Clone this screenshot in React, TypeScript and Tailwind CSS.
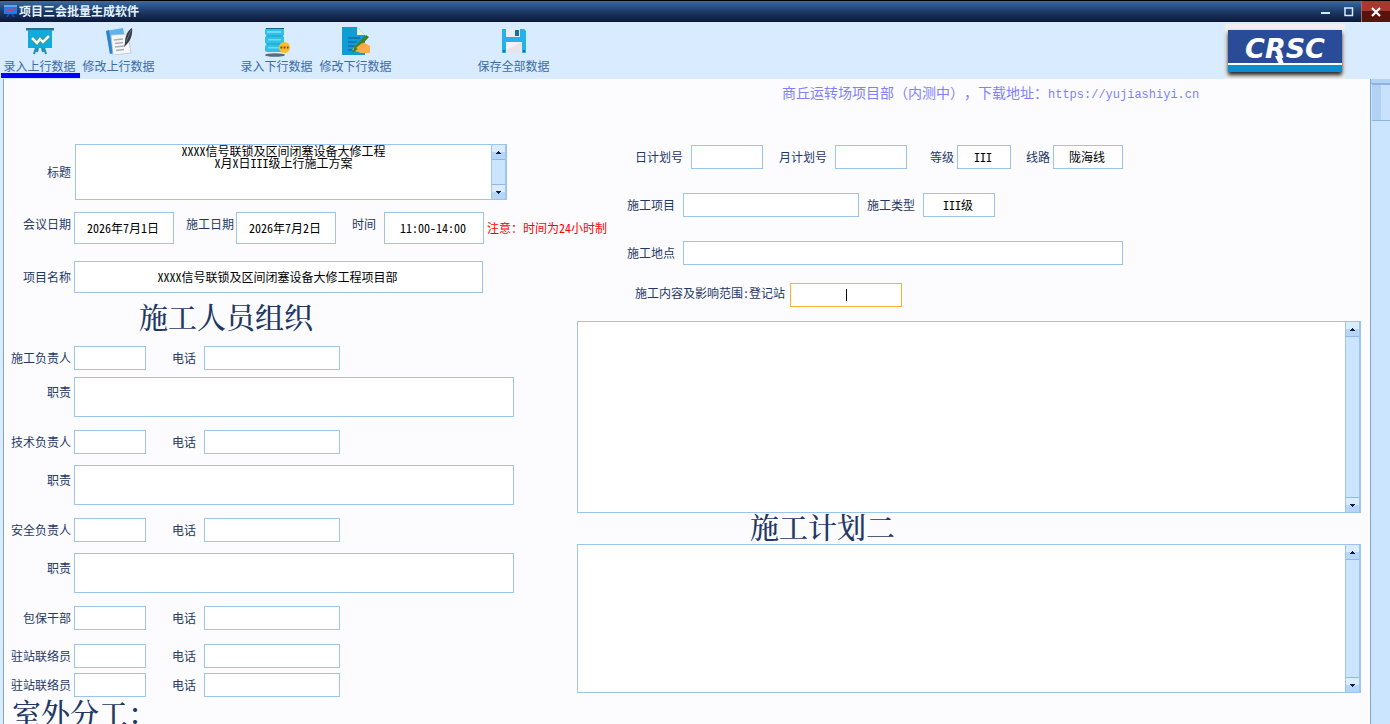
import React, { useId, useState } from 'react';

const uiFont = "font-['Noto_Sans_Mono_CJK_SC','Noto_Sans_CJK_SC',sans-serif]";
const headingFont = "font-['Noto_Serif_CJK_SC','Noto_Sans_CJK_SC',serif]";

const boxStyle = 'border border-[#9bc4ef] bg-white text-black text-center outline-none focus:border-[#f5b335]';

interface FieldProps {
  label: string;
  width: string;
  height?: string;
  value?: string;
  labelClass?: string;
  gap?: string;
  className?: string;
}

const Field: React.FC<FieldProps> = ({ label, width, height = 'h-6', value = '', labelClass = '', gap = 'gap-2', className = '' }) => {
  const id = useId();
  return (
    <div className={`flex items-center ${gap} ${className}`}>
      <label htmlFor={id} className={`shrink-0 whitespace-nowrap ${labelClass}`}>{label}</label>
      <input id={id} defaultValue={value} className={`${boxStyle} pb-0.5 pr-0.5 ${width} ${height}`} />
    </div>
  );
};

const SideLabel = 'w-[67px] text-right';

const ScrollBar: React.FC = () => (
  <div className="w-[15px] shrink-0 flex flex-col justify-between bg-[#cbe4ff] border-x border-[#9bc4ef]">
    <ScrollButton up />
    <ScrollButton />
  </div>
);

const ScrollButton: React.FC<{ up?: boolean }> = ({ up }) => (
  <button
    aria-label={up ? '向上' : '向下'}
    className={`h-[15px] w-full flex items-center justify-center border-[#8fb9ea] bg-linear-to-b from-[#dcebfd] from-50% to-[#b9d5f5] to-50% ${up ? 'border-b' : 'border-t'}`}
  >
    <svg width="5" height="3" viewBox="0 0 5 3" fill="#0b1f4b" shapeRendering="crispEdges">
      {up ? <path d="M2 0h1v1h1v1h1v1H0V2h1V1h1z" /> : <path d="M0 0h5v1H4v1H3v1H2V2H1V1H0z" />}
    </svg>
  </button>
);

const TextArea: React.FC<{ id?: string; label?: string; value?: string; className: string }> = ({ id, label, value = '', className }) => (
  <div className={`flex border border-[#9bc4ef] bg-white ${className}`}>
    <textarea
      id={id}
      aria-label={label}
      defaultValue={value}
      className="flex-1 min-w-0 resize-none overflow-hidden text-center text-black leading-3 outline-none"
    />
    <ScrollBar />
  </div>
);

const Duty: React.FC<{ className?: string }> = ({ className = '' }) => {
  const id = useId();
  return (
    <div className={`flex gap-[3px] ${className}`}>
      <label htmlFor={id} className={`${SideLabel} pt-[7px]`}>职责</label>
      <textarea id={id} className={`${boxStyle} w-[440px] h-10 resize-none block`} />
    </div>
  );
};

const Person: React.FC<{ label: string; className?: string }> = ({ label, className = '' }) => (
  <div className={`flex ${className}`}>
    <Field label={label} width="w-[72px]" labelClass={SideLabel} gap="gap-[3px]" />
    <Field label="电话" width="w-[136px]" className="ml-[26px]" />
  </div>
);

const BoardIcon = () => (
  <svg width="28" height="28" viewBox="0 0 28 28">
    <path d="M0 1h28v2.500H0z" fill="#2d6f86" />
    <path d="M2 3h24v18H2z" fill="#10abdd" />
    <path d="M10 21l-2 6M18 21l2 6M12 21l-1 4M16 21l1 4" stroke="#168db5" strokeWidth="2" />
    <path d="M6 11l5 5 3-4 3 3 6-6" fill="none" stroke="#4a8a76" strokeWidth="4" />
    <path d="M6 11l5 5 3-4 3 3 6-6" fill="none" stroke="#f1fff0" strokeWidth="2.500" />
  </svg>
);

const NoteIcon = () => (
  <svg width="28" height="28" viewBox="0 0 28 28">
    <path d="M1 4l17-3 4 22-17 4z" fill="#5fb2ee" />
    <path d="M1 4l3-1 4 23-3 1z" fill="#2f83cb" />
    <path d="M6 8l17-1 3 19-18 2z" fill="#f4f6f8" stroke="#a9b8c8" strokeWidth="0.6" />
    <path d="M9 13l9-1M10 16.500l8-1M10 20l9-1M11 23.500l8-1" stroke="#a6b0bb" strokeWidth="1.300" />
    <path d="M27 1c-5 3-7 9-7 15l-1 4 3-3c3-3 6-9 5-16z" fill="#343b45" />
    <path d="M26 3l-5 12" stroke="#79828f" strokeWidth="0.800" />
  </svg>
);

const DatabaseIcon = () => (
  <svg width="28" height="30" viewBox="0 0 28 30">
    <ellipse cx="12" cy="28" rx="10" ry="1.700" fill="#5a6b7c" />
    <path d="M3 1h18v7l-1 1 1 1v7l-1 1 1 1v6H4l-2-1v-5l2-2-2-1v-6l2-1-2-2V3z" fill="#31c1e8" />
    <path d="M3 1h18v1H3z" fill="#17668a" />
    <path d="M4 4h14v2H4zM5 12h13v1.500H5zM5 20h11v1.500H5z" fill="#6fdcf6" />
    <path d="M3 9h17M3 17h17" stroke="#1ba3cc" strokeWidth="1.200" />
    <circle cx="21.500" cy="20.500" r="5.500" fill="#fdbd27" />
    <path d="M17.500 20.500h1.800M20.700 20.500h1.800M23.900 20.500h1.600" stroke="#7b3e16" strokeWidth="2" />
  </svg>
);

const EditIcon = () => (
  <svg width="28" height="28" viewBox="0 0 28 28">
    <path d="M0 0h15l8 8v20H0z" fill="#0d9ed5" />
    <path d="M15 0l8 8h-8z" fill="#e5f6df" />
    <path d="M6 11h12M6 15h9M6 19h7M6 23h5" stroke="#1768b3" strokeWidth="1.500" />
    <path d="M10 23l5-6 5-3 3 2 5 3v7h-9l-6-2z" fill="#ffad4a" />
    <path d="M10 26l3-7L24 8l3 2-11 12z" fill="#3b8125" />
    <path d="M14 21l6-5 4 2-6 5z" fill="#fba943" />
  </svg>
);

const SaveIcon = () => (
  <svg width="28" height="28" viewBox="0 0 28 28">
    <path d="M2 2h22l2 2v22H2z" fill="#27b1eb" />
    <path d="M6 2h14v8H6z" fill="#e9eef1" />
    <path d="M15 3h4v6h-4z" fill="#176ea7" />
    <path d="M6 15h16v11H6z" fill="#e6e6ea" />
    <path d="M6 15h16l-16 8z" fill="#f3f3f5" />
    <path d="M3 23h2v2H3zM23 23h2v2h-2z" fill="#146fac" />
  </svg>
);

const tools = [
  { name: '录入上行数据', icon: <BoardIcon /> },
  { name: '修改上行数据', icon: <NoteIcon /> },
  null,
  { name: '录入下行数据', icon: <DatabaseIcon /> },
  { name: '修改下行数据', icon: <EditIcon /> },
  null,
  { name: '保存全部数据', icon: <SaveIcon /> },
];

const Toolbar: React.FC = () => {
  const [active, setActive] = useState('录入上行数据');
  return (
    <header className="shrink-0 flex justify-between bg-[#d9ebff] pl-px pr-[45px]">
      <nav className="flex pb-px">
        {tools.map((tool, i) =>
          tool ? (
            <button
              key={tool.name}
              onClick={() => setActive(tool.name)}
              className={`w-[79px] flex flex-col items-center pt-[5px] pr-0.5 border-b-[5px] text-[#3c6ca5] ${
                active === tool.name ? 'border-[#0000ff]' : 'border-transparent'
              }`}
            >
              <span className="h-7 flex justify-center">{tool.icon}</span>
              <span className="mt-1 leading-[14px] whitespace-nowrap">{tool.name}</span>
            </button>
          ) : (
            <span key={i} className="w-[79px]" />
          )
        )}
      </nav>
      <Logo />
    </header>
  );
};

const Logo: React.FC = () => (
  <div className="self-end w-[120px] h-[55px] bg-[#efeff0] px-[3px] pt-1.5">
    <div className="relative h-[42px] flex flex-col shadow-[0_3px_4px_#222]">
      <div className="h-[33px] pt-1 bg-[#294b98] flex items-center justify-center">
        <span className="font-['DejaVu_Sans',sans-serif] font-bold italic text-[27px] leading-[29px] text-white">CRSC</span>
      </div>
      <div className="h-0.5 bg-white" />
      <div className="h-[7px] bg-[#0790cb]" />
      <svg className="absolute left-[47px] top-[26px]" width="10" height="8" viewBox="0 0 10 8">
        <path d="M0 0h6l3 8H4z" fill="#fff" />
      </svg>
    </div>
  </div>
);

const TitleBar: React.FC = () => (
  <div className="shrink-0 h-[22px] flex items-center justify-between pl-1 border-t border-black bg-linear-to-b from-[#3a6ba3] via-[#1d3a68] via-50% to-[#0b1838]">
    <div className="flex items-center gap-0.5 pb-0.5 text-[#e3f4ff] font-bold">
      <svg width="13" height="13" viewBox="0 0 13 13">
        <path d="M0 1h13v9H0z" fill="#1b7df0" />
        <path d="M0 1h13v2H0z" fill="#52a8fa" />
        <path d="M2 8l3-3 2 2 4-3" stroke="#e93645" strokeWidth="1.500" fill="none" />
        <path d="M5 10l-2 3M8 10l2 3" stroke="#1551d0" strokeWidth="1.500" />
      </svg>
      <span>项目三会批量生成软件</span>
    </div>
    <div className="self-stretch flex">
      <button aria-label="最小化" className="w-[22px] flex items-center justify-center">
        <svg width="10" height="10"><path d="M0 5h9v2H0z" fill="#d3eaff" /></svg>
      </button>
      <button aria-label="最大化" className="w-6 flex items-center justify-center">
        <svg width="10" height="10"><path d="M1 1h7.500v7.500H1zM0 1h9" stroke="#d3eaff" strokeWidth="1.500" fill="none" /></svg>
      </button>
      <button aria-label="关闭" className="w-[29px] flex items-center justify-center border-l border-[#a06b70] bg-linear-to-b from-[#a8382e] from-50% to-[#59130f] to-50%">
        <svg width="10" height="10"><path d="M1 1l8 8M9 1l-8 8" stroke="#fff" strokeWidth="2.200" /></svg>
      </button>
    </div>
  </div>
);

const Heading: React.FC<{ className: string; children: React.ReactNode }> = ({ className, children }) => (
  <h2 className={`${headingFont} text-[29px] leading-[32px] font-medium whitespace-nowrap ${className}`}>{children}</h2>
);

const LeftForm: React.FC = () => (
  <section className="w-[573px] shrink-0 pt-[65px]">
    <div className="flex items-center gap-1">
      <label htmlFor="title" className={SideLabel}>标题</label>
      <TextArea
        id="title"
        className="w-[432px] h-14"
        value={'XXXX信号联锁及区间闭塞设备大修工程\nX月X日III级上行施工方案'}
      />
    </div>
    <div className="flex mt-3">
      <Field label="会议日期" value="2026年7月1日" width="w-[100px]" height="h-8" labelClass={`${SideLabel} pb-2`} gap="gap-[3px]" />
      <Field label="施工日期" value="2026年7月2日" width="w-[100px]" height="h-8" labelClass="pb-2" gap="gap-0.5" className="ml-3" />
      <Field label="时间" value="11:00-14:00" width="w-[100px]" height="h-8" labelClass="pb-2" className="ml-4" />
      <span className="self-center ml-[3px] whitespace-nowrap text-[#ff0000]">注意：时间为24小时制</span>
    </div>
    <Field
      label="项目名称"
      value="XXXX信号联锁及区间闭塞设备大修工程项目部"
      width="w-[409px]"
      height="h-8"
      labelClass={SideLabel}
      gap="gap-[3px]"
      className="mt-[17px]"
    />
    <Heading className="pl-[135px] mt-2">施工人员组织</Heading>
    <Person label="施工负责人" className="mt-[13px]" />
    <Duty className="mt-[7px]" />
    <Person label="技术负责人" className="mt-[13px]" />
    <Duty className="mt-[11px]" />
    <Person label="安全负责人" className="mt-[13px]" />
    <Duty className="mt-[11px]" />
    <Person label="包保干部" className="mt-[13px]" />
    <Person label="驻站联络员" className="mt-[14px]" />
    <Person label="驻站联络员" className="mt-[5px]" />
    <Heading className="pl-2">室外分工：</Heading>
  </section>
);

const RightForm: React.FC = () => (
  <section className="flex-1 min-w-0 pr-[9px]">
    <p className="pl-[205px] pt-[3px] text-sm text-[#8080ff] whitespace-nowrap [text-spacing-trim:space-all]">
      商丘运转场项目部（内测中），下载地址：<a href="https://yujiashiyi.cn" className="font-['Liberation_Mono',monospace] text-xs">https://yujiashiyi.cn</a>
    </p>
    <div className="flex mt-[42px] pl-[58px]">
      <Field label="日计划号" width="w-[72px]" />
      <Field label="月计划号" width="w-[72px]" className="ml-4" />
      <Field label="等级" value="III" width="w-[54px]" gap="gap-[3px]" className="ml-[23px]" />
      <Field label="线路" value="陇海线" width="w-[70px]" gap="gap-[3px]" className="ml-[15px]" />
    </div>
    <div className="flex mt-6 pl-[50px]">
      <Field label="施工项目" width="w-[176px]" />
      <Field label="施工类型" value="III级" width="w-[72px]" className="ml-2" />
    </div>
    <Field label="施工地点" width="w-[440px]" className="mt-6 pl-[50px]" />
    <div className="flex items-center mt-[18px] pl-[58px] gap-[5px]">
      <label htmlFor="station" className="pb-1 whitespace-nowrap">施工内容及影响范围:登记站</label>
      <div className="relative">
        <input id="station" className="block w-28 h-6 border border-[#f5b335] bg-white text-center text-black outline-none" />
        <span className="absolute left-1/2 top-1.5 w-px h-3 bg-black pointer-events-none" />
      </div>
    </div>
    <TextArea label="施工内容及影响范围" className="mt-3.5 h-48" />
    <Heading className="pl-[173px] -mt-0.5 mb-px">施工计划二</Heading>
    <TextArea label="施工计划二" className="h-[149px]" />
  </section>
);

const PageScroll: React.FC = () => (
  <div className="w-5 shrink-0 flex flex-col border-l border-[#84a5c5] bg-[#cbe4ff]">
    <div className="h-[5px] bg-[#b4d3f3] border-b border-[#8ab4e4]" />
    <div className="h-[37px] ml-px border-y border-[#8ab4e4] bg-linear-to-r from-[#b3d2f3] from-50% to-[#c8e1fd] to-50%" />
  </div>
);

export default function App() {
  return (
    <div className={`h-screen flex flex-col overflow-hidden text-xs text-[#1f3864] ${uiFont}`}>
      <TitleBar />
      <Toolbar />
      <div className="flex-1 min-h-0 flex bg-[#d9ebff] pl-[3px]">
        <main className="flex-1 min-w-0 flex overflow-hidden border-l border-[#84a5c5] bg-[#fcfcff]">
          <LeftForm />
          <RightForm />
        </main>
        <PageScroll />
      </div>
    </div>
  );
}
